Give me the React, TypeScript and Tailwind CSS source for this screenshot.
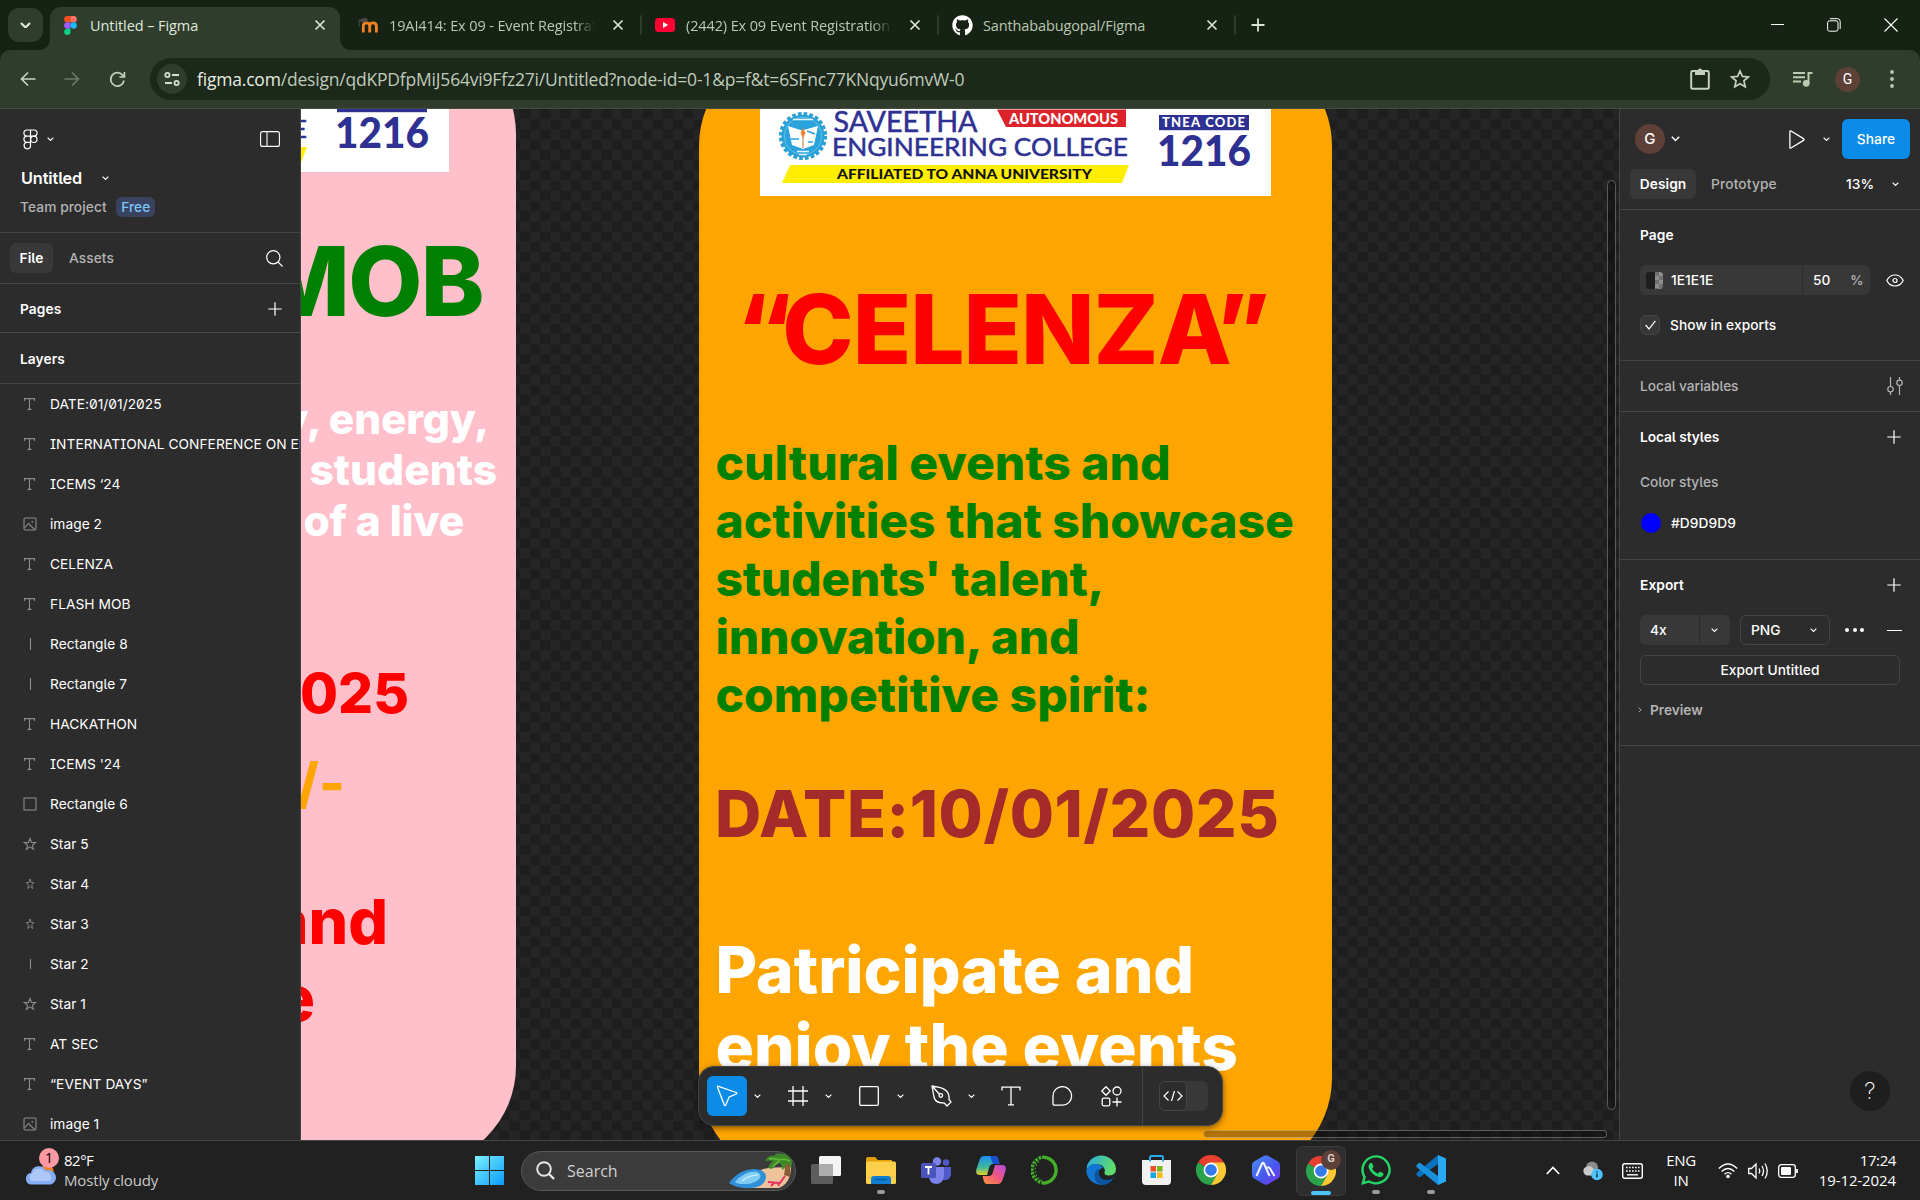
import React from "react";
import { FaGithub, FaWhatsapp } from "react-icons/fa";

const INTER = "font-[Inter,sans-serif] [font-feature-settings:'cv05']";

function Chevron({ className = "", w = 7 }: { className?: string; w?: number }) {
  return (
    <svg width={w} height={w * 0.62} viewBox="0 0 8 5" fill="none" className={`shrink-0 ${className}`}>
      <path d="M0.7 0.7 L4 4 L7.3 0.7" stroke="currentColor" strokeWidth="1.3" />
    </svg>
  );
}

function Plus() {
  return (
    <svg width="14" height="14" viewBox="0 0 14 14" className="shrink-0">
      <path d="M7 0.3V13.7M0.3 7H13.7" stroke="#fff" strokeWidth="1.2" />
    </svg>
  );
}

function Close() {
  return (
    <svg width="12" height="12" viewBox="0 0 12 12" className="shrink-0">
      <path d="M1.5 1.5L10.5 10.5M10.5 1.5L1.5 10.5" stroke="#dbe5d6" strokeWidth="1.7" />
    </svg>
  );
}

function Tab({ icon, label, faded }: { icon: React.ReactNode; label: string; faded?: boolean }) {
  return (
    <div className="flex h-[50px] w-[297px] items-center">
      <div className="ml-[13px] flex w-[31px] items-center">{icon}</div>
      <div
        className={`w-[206px] overflow-hidden pt-px text-[14.5px] tracking-[-0.12px] whitespace-nowrap text-[#b8c8b1] ${
          faded ? "[mask-image:linear-gradient(to_right,#000_90%,transparent)]" : ""
        }`}
      >
        {label}
      </div>
      <div className="ml-[17px]">
        <Close />
      </div>
      <div className="ml-auto h-5 w-0.5 rounded bg-[#2e3b2b]" />
    </div>
  );
}

function FigmaMark() {
  return (
    <svg width="13" height="19" viewBox="0 0 12 18">
      <path d="M3 0H6V6H3A3 3 0 0 1 3 0Z" fill="#f24e1e" />
      <path d="M6 0H9A3 3 0 0 1 9 6H6Z" fill="#ff7262" />
      <path d="M3 6H6V12H3A3 3 0 0 1 3 6Z" fill="#a259ff" />
      <circle cx="9" cy="9" r="3" fill="#1abcfe" />
      <path d="M3 12H6V15A3 3 0 1 1 3 12Z" fill="#0acf83" />
    </svg>
  );
}

function BrowserChrome() {
  return (
    <header className="h-[109px] shrink-0 bg-[#162213] font-['Open_Sans',sans-serif]">
      <div className="flex h-[50px]">
        <div className="mt-2 ml-2 flex h-[34px] w-[35px] items-center justify-center rounded-[11px] bg-[#303d2d]">
          <Chevron w={11} className="text-[#dfe8da] [&>path]:[stroke-width:1.6]" />
        </div>
        <div className="relative mt-[7px] ml-[7px] flex h-[43px] w-[290px] rounded-t-[11px] bg-[#303d2d]">
          <svg className="absolute bottom-0 -left-[11px]" width="11" height="11">
            <path d="M11 0V11H0A11 11 0 0 0 11 0Z" fill="#303d2d" />
          </svg>
          <svg className="absolute -right-[11px] bottom-0" width="11" height="11">
            <path d="M0 0V11H11A11 11 0 0 1 0 0Z" fill="#303d2d" />
          </svg>
          <div className="flex h-9 w-full items-center">
            <div className="ml-[14px] w-[26px]">
              <FigmaMark />
            </div>
            <div className="pt-px text-[14.5px] tracking-[-0.08px] whitespace-nowrap text-[#dfe8da]">Untitled – Figma</div>
            <div className="mr-[14px] ml-auto">
              <Close />
            </div>
          </div>
        </div>
        <div className="ml-[5px] flex">
          <Tab
            faded
            label="19AI414: Ex 09 - Event Registration"
            icon={
              <svg width="21" height="16" viewBox="0 0 21 16" fill="none">
                <path d="M5.3 15.5V9Q5.3 5.8 8.5 5.8Q11.700 5.800 11.700 9V15.500M11.700 9Q11.700 5.800 15 5.800Q18.400 5.800 18.400 9V15.500" stroke="#f58220" strokeWidth="2.800" />
                <path d="M0 3L8 0.5L10 3L5 6Z" fill="#4b4b4b" />
                <path d="M1.2 3V10" stroke="#4b4b4b" />
              </svg>
            }
          />
          <Tab
            faded
            label="(2442) Ex 09 Event Registration F"
            icon={
              <svg width="20" height="14" viewBox="0 0 20 14">
                <rect width="20" height="14" rx="3.5" fill="#f03" />
                <path d="M8 4L13.2 7L8 10Z" fill="#fff" />
              </svg>
            }
          />
          <Tab label="Santhababugopal/Figma" icon={<FaGithub size={21} color="#fff" />} />
        </div>
        <svg width="14" height="14" viewBox="0 0 14 14" className="mt-[18px] ml-[15px]">
          <path d="M7 0.5V13.5M0.5 7H13.5" stroke="#dbe5d6" strokeWidth="1.8" />
        </svg>
        <div className="mr-[22px] ml-auto flex h-[49px] items-center gap-[43px]">
          <div className="h-px w-[13px] bg-white" />
          <svg width="14" height="14" viewBox="0 0 14 14" fill="none" stroke="#fff">
            <rect x="0.6" y="2.8" width="10.4" height="10.4" rx="2" />
            <path d="M3 0.7H10.5Q13.2 0.7 13.2 3.5V11" />
          </svg>
          <svg width="14" height="14" viewBox="0 0 14 14">
            <path d="M0.5 0.5L13.5 13.5M13.5 0.5L0.5 13.5" stroke="#fff" strokeWidth="1.1" />
          </svg>
        </div>
      </div>
      <div className="flex h-[59px] rounded-t-[10px] border-b border-[#454c43] bg-[#303d2d]">
        <div className="flex h-[58px] w-full items-center text-[#b9ccb2]">
          <svg width="16" height="16" viewBox="0 0 16 16" fill="none" stroke="#c3d3bc" strokeWidth="1.7" className="ml-5">
            <path d="M15.5 8H1.5M8 1.5L1.5 8L8 14.5" />
          </svg>
          <svg width="16" height="16" viewBox="0 0 16 16" fill="none" stroke="#6c7a68" strokeWidth="1.7" className="ml-7">
            <path d="M0.5 8H14.5M8 1.5L14.5 8L8 14.5" />
          </svg>
          <svg width="17" height="17" viewBox="0 0 17 17" fill="none" stroke="#c3d3bc" strokeWidth="1.7" className="ml-[29px]">
            <path d="M15 9.5A6.7 6.7 0 1 1 13.6 4.2L15 5.5M15.4 1V6H10.4" />
          </svg>
          <div className="ml-6 flex h-[42px] w-[1620px] items-center rounded-full bg-[#1c2819]">
            <div className="ml-[7px] flex size-[30px] items-center justify-center rounded-full bg-[#303d2d]">
              <svg width="16" height="16" viewBox="0 0 16 16" fill="none" stroke="#d5e0cf" strokeWidth="1.8">
                <circle cx="3.4" cy="4" r="2.1" />
                <path d="M8 4H15M1 12H8" />
                <circle cx="12.6" cy="12" r="2.1" />
              </svg>
            </div>
            <div className="ml-[10px] text-[17.5px] tracking-[-0.195px] whitespace-nowrap text-[#bfcbb9]">
              <span className="text-[#e6ece2]">figma.com</span>/design/qdKPDfpMiJ564vi9Ffz27i/Untitled?node-id=0-1&amp;p=f&amp;t=6SFnc77KNqyu6mvW-0
            </div>
            <svg width="20" height="22" viewBox="0 0 20 22" fill="none" className="ml-auto">
              <rect x="1.2" y="3" width="17.6" height="17.8" rx="1.5" stroke="#c5cfc0" strokeWidth="2" />
              <path d="M5 3H15V7H5Z" fill="#c5cfc0" />
              <circle cx="10" cy="2.7" r="2.2" fill="#c5cfc0" />
            </svg>
            <svg width="20" height="20" viewBox="0 0 20 20" fill="none" className="mr-5 ml-5">
              <path d="M10 2L12.4 7.4L18.3 8L13.9 11.9L15.2 17.7L10 14.7L4.8 17.7L6.1 11.9L1.7 8L7.6 7.4Z" stroke="#c5cfc0" strokeWidth="1.7" />
            </svg>
          </div>
          <svg width="20" height="16" viewBox="0 0 20 16" fill="none" stroke="#b9ccb2" strokeWidth="2" className="ml-[23px]">
            <path d="M0 2H12M0 6.2H12M0 10.4H8M15.5 12.5V2H19.5" />
            <circle cx="13.2" cy="12.3" r="2.4" fill="#b9ccb2" />
          </svg>
          <div className="ml-[22px] flex size-[25px] items-center justify-center rounded-full bg-[#5d4037] font-[Roboto,sans-serif] text-[14px] text-white">
            G
          </div>
          <svg width="4" height="18" viewBox="0 0 4 18" fill="#b9ccb2" className="ml-[30px]">
            <circle cx="2" cy="2" r="1.9" />
            <circle cx="2" cy="9" r="1.9" />
            <circle cx="2" cy="16" r="1.9" />
          </svg>
        </div>
      </div>
    </header>
  );
}

type Kind = "text" | "image" | "line" | "rect" | "star" | "ministar" | "shortline";

const layers: [Kind, string][] = [
  ["text", "DATE:01/01/2025"],
  ["text", "INTERNATIONAL CONFERENCE ON EN"],
  ["text", "ICEMS ‘24"],
  ["image", "image 2"],
  ["text", "CELENZA"],
  ["text", "FLASH MOB"],
  ["line", "Rectangle 8"],
  ["line", "Rectangle 7"],
  ["text", "HACKATHON"],
  ["text", "ICEMS '24"],
  ["rect", "Rectangle 6"],
  ["star", "Star 5"],
  ["ministar", "Star 4"],
  ["ministar", "Star 3"],
  ["shortline", "Star 2"],
  ["star", "Star 1"],
  ["text", "AT SEC"],
  ["text", "“EVENT DAYS”"],
  ["image", "image 1"],
];

const STAR = "M7 1.5L8.5 5.4L12.6 5.6L9.4 8.1L10.5 12.2L7 9.9L3.5 12.2L4.6 8.1L1.4 5.6L5.5 5.4Z";

function LayerIcon({ kind }: { kind: Kind }) {
  return (
    <svg width="14" height="14" viewBox="0 0 14 14" fill="none" stroke="#8c8c8c" strokeWidth="1.1" className="shrink-0">
      {kind === "text" && <path d="M1.5 4V1.6H11.5V4M6.5 1.6V12.4M4.5 12.4H8.5" />}
      {kind === "image" && (
        <>
          <rect x="1" y="1" width="12" height="12" rx="1.5" />
          <path d="M1.5 11L5.5 6.5L11.5 12.5" />
          <circle cx="9.3" cy="4.8" r="0.9" fill="#8c8c8c" stroke="none" />
        </>
      )}
      {kind === "line" && <path d="M7.5 1V13" />}
      {kind === "shortline" && <path d="M7.5 2V12" />}
      {kind === "rect" && <rect x="1" y="1" width="12" height="12" />}
      {kind === "star" && <path d={STAR} />}
      {kind === "ministar" && <path d={STAR} transform="translate(2.2 0.6) scale(0.7 0.9)" />}
    </svg>
  );
}

function LeftPanel() {
  return (
    <aside className={`flex w-[301px] shrink-0 flex-col border-r border-[#444] bg-[#2c2c2c] text-[13.75px] tracking-[0.07px] text-white ${INTER}`}>
      <div className="h-[124px] border-b border-[#444] pl-5">
        <div className="flex h-[60px] items-center pr-5">
          <svg width="15" height="21" viewBox="0 0 15 21" fill="none" stroke="#fff" strokeWidth="1.2" className="ml-[3px]">
            <path d="M7.5 1H4A3.1 3.1 0 0 0 4 7.2H7.5ZM7.5 1H11A3.1 3.1 0 0 1 11 7.2H7.5ZM7.5 7.2H4A3.1 3.1 0 0 0 4 13.4H7.5ZM4 13.4A3.2 3.2 0 1 0 7.5 16.5V13.4Z" />
            <circle cx="10.8" cy="10.3" r="3.2" />
          </svg>
          <Chevron className="ml-[9px]" />
          <svg width="20" height="16" viewBox="0 0 20 16" fill="none" stroke="#fff" strokeWidth="1.1" className="ml-auto">
            <rect x="0.6" y="0.6" width="18.8" height="14.8" rx="2" />
            <path d="M7 0.6V15.4" />
          </svg>
        </div>
        <div className="mt-[-1px] flex h-5 items-center pl-px text-[16.25px] font-semibold tracking-[-0.1px]">
          Untitled
          <Chevron className="ml-[20px]" />
        </div>
        <div className="mt-[9px] flex h-5 items-center font-[450] text-[#b3b3b3]">
          Team project
          <span className="ml-[9.5px] flex h-5 items-center rounded-[6px] bg-[#394360] px-[5px] text-[#7cc4f8]">Free</span>
        </div>
      </div>
      <div className="flex h-[51px] items-center border-b border-[#444] px-2.5">
        <div className="flex h-[30px] w-[43px] items-center justify-center rounded-[6px] bg-[#383838] font-semibold">File</div>
        <div className="ml-4 font-[450] text-[#b3b3b3]">Assets</div>
        <svg width="17" height="17" viewBox="0 0 17 17" fill="none" stroke="#fff" strokeWidth="1.2" className="mr-[7px] ml-auto">
          <circle cx="7.3" cy="7.3" r="6.6" />
          <path d="M12.2 12.2L16.5 16.5" />
        </svg>
      </div>
      <div className="flex h-[49px] items-center justify-between border-b border-[#4b4b4b] pt-[2px] pr-[18px] pl-5 font-semibold">
        Pages
        <Plus />
      </div>
      <div className="flex h-[51px] items-center border-b border-[#444] pt-[2px] pl-5 font-semibold">Layers</div>
      <div className="min-h-0 flex-1 overflow-hidden">
        {layers.map(([kind, name]) => (
          <div key={name} className="flex h-10 items-center pl-[23px]">
            <LayerIcon kind={kind} />
            <span className="ml-[13px] tracking-[0.03px] whitespace-nowrap [font-feature-settings:'zero','cv08','cv05']">{name}</span>
          </div>
        ))}
      </div>
    </aside>
  );
}

function CollegeLogo({ className = "", cropped }: { className?: string; cropped?: boolean }) {
  return (
    <svg width="512" height="88" viewBox="759 109 512 88" className={className} fontFamily="Lato, sans-serif" fontWeight="400">
      <path d="M996 109.5H1125V127H1005Z" fill="#dc2329" />
      <path d="M789 165H1128L1121 183H781Z" fill="#ffee00" />
      <g fill="#2e3192">
        <rect x="1158" y="115" width="90" height="15.2" />
        <text x="1156" y="166" fontSize="41.5" fontWeight="900" textLength="94" lengthAdjust="spacingAndGlyphs">1216</text>
      </g>
      {cropped ? (
        <text x="1128" y="156.3" fontSize="24.5" fill="#2e3192" stroke="#2e3192" strokeWidth="0.5" textAnchor="end">E</text>
      ) : (
        <>
          <circle cx="802" cy="136" r="21.5" fill="#2aa3dc" />
          <circle cx="802" cy="136" r="22.3" fill="none" stroke="#2a9fd0" strokeWidth="3.6" strokeDasharray="3.6 2.24" />
          <circle cx="802" cy="136" r="18.6" fill="none" stroke="#7fd0ee" strokeWidth="0.6" />
          <path d="M787 126L801 130.5L817 126L813 145L802 149L791 145Z" fill="#fff" />
          <path d="M802 131V148" stroke="#b5793a" strokeWidth="1" />
          <path d="M802 128L804.5 133L802 138L799.5 133Z" fill="#f0812a" />
          <path d="M792 119.5H812M796 151.5H808M798 154.5H806" stroke="#e8f6fc" strokeWidth="1.3" />
          <path d="M790 139H798M806 131L814 134M807 142H812" stroke="#2aa3dc" strokeWidth="1.4" />
          <g fill="#2e3192" stroke="#2e3192" strokeWidth="0.5">
            <text x="832.5" y="132.3" fontSize="28" textLength="144" lengthAdjust="spacingAndGlyphs">SAVEETHA</text>
            <text x="831" y="156.3" fontSize="24.5" textLength="296" lengthAdjust="spacingAndGlyphs">ENGINEERING COLLEGE</text>
          </g>
          <text x="1161" y="127.4" fontSize="13" fontWeight="900" fill="#fff" textLength="83">TNEA CODE</text>
          <text x="1008" y="123.8" fontSize="15" fontWeight="900" fill="#fff" textLength="109" lengthAdjust="spacingAndGlyphs">AUTONOMOUS</text>
          <text x="836" y="179" fontSize="13.6" fontWeight="900" fill="#141414" textLength="255" lengthAdjust="spacingAndGlyphs">
            AFFILIATED TO ANNA UNIVERSITY
          </text>
        </>
      )}
    </svg>
  );
}

function Canvas() {
  return (
    <main className="relative min-w-0 flex-1 overflow-hidden bg-[repeating-conic-gradient(#1e1e1e_0_25%,#252525_0_50%)] bg-[length:20.448px_20.448px] bg-[position:4.3px_0px] font-[Inter,sans-serif] leading-[1.21] font-extrabold whitespace-nowrap">
      {/* flash mob poster */}
      <section className="absolute -top-[75px] -left-[418px] h-[1132px] w-[633px] rounded-[100px] bg-[#ffc0cb]">
        <div className="absolute top-[75px] left-[54px] h-[63px] w-[512px] overflow-hidden bg-white">
          <CollegeLogo cropped className="-mt-[18px] ml-px" />
        </div>
        <div className="absolute top-[189px] right-[33px] text-[96px] tracking-[-1.6px] text-[#008000]">MOB</div>
        <div className="absolute top-[358.5px] right-[19px] flex flex-col items-end text-[42.5px] text-white">
          <div className="mr-[8px] tracking-[-0.2px]">y, energy,</div>
          <div>students</div>
          <div className="mr-[33px] tracking-[-0.2px]">of a live</div>
        </div>
        <div className="absolute top-[625.5px] right-[107px] text-[55px] text-[#ff0000]">025</div>
        <div className="absolute top-[716px] right-[171px] text-[55px] text-[#ffa500]">/-</div>
        <div className="absolute top-[849.5px] right-[128px] text-[62.5px] text-[#ff0000]">and</div>
        <div className="absolute top-[927px] right-[201px] text-[62.5px] text-[#ff0000]">e</div>
      </section>

      {/* celenza poster */}
      <section className="absolute -top-[63px] left-[397.5px] h-[1132px] w-[633.5px] rounded-[100px] bg-[#ffa500]">
        <div className="absolute top-[63px] left-[61px] h-[87px] w-[511px] overflow-hidden bg-white">
          <CollegeLogo />
        </div>
        <div className="absolute top-[224.5px] left-[38px] text-[96px] tracking-[-1px] text-[#ff0000]">
          <span className="mr-[-9px]">“</span>CELENZA<span className="ml-[-15px]">”</span>
        </div>
        <div className="absolute top-[388px] left-[17px] text-[48px] leading-[58px] text-[#008000]">
          cultural events and
          <br />
          activities that showcase
          <br />
          <span className="tracking-[-0.3px]">students' talent,</span>
          <br />
          <span className="tracking-[-0.25px]">innovation, and</span>
          <br />
          competitive spirit:
        </div>
        <div className="absolute top-[729px] left-[16.5px] text-[64px] tracking-[0.6px] text-[#a52a2a]">DATE:10/01/2025</div>
        <div className="absolute top-[884.5px] left-[17px] text-[64px] text-white">
          Patricipate and
          <br />
          enjoy the events
        </div>
      </section>

      <div className="absolute top-[71px] right-[3px] h-[930px] w-[9px] rounded-full border border-[#5a5a5a] bg-black/30" />
      <div className="absolute bottom-[2px] left-[902px] h-[8px] w-[404px] rounded-full border border-white/30 bg-black/30" />

      <ToolDock />
    </main>
  );
}

function ToolDock() {
  return (
    <div className="absolute top-[957px] left-[397px] flex h-[60px] w-[525px] items-center rounded-[16px] border border-[#444] bg-[#2c2c2c] text-white shadow-[0_2px_6px_rgba(0,0,0,0.5)]">
      <div className="ml-2 flex size-10 items-center justify-center rounded-[6px] bg-[#0c8ce9]">
        <svg width="22" height="22" viewBox="0 0 22 22" fill="none" stroke="#fff" strokeWidth="1.3" strokeLinejoin="round">
          <path d="M1.5 2.3Q1 0.8 2.5 1.3L20.2 7.5Q21.5 8.2 20.2 9L13 12.2L9.8 20Q9 21.3 8.3 20Z" />
        </svg>
      </div>
      <Chevron className="ml-[7px]" />
      <svg width="20" height="20" viewBox="0 0 20 20" stroke="#fff" strokeWidth="1.3" className="ml-[27px]">
        <path d="M5 0V20M15 0V20M0 5H20M0 15H20" />
      </svg>
      <Chevron className="ml-[17px]" />
      <svg width="20" height="20" viewBox="0 0 20 20" fill="none" stroke="#fff" strokeWidth="1.3" className="ml-[27px]">
        <rect x="0.7" y="0.7" width="18.6" height="18.6" rx="1" />
      </svg>
      <Chevron className="ml-[18px]" />
      <svg width="21" height="22" viewBox="0 0 21 22" fill="none" stroke="#fff" strokeWidth="1.3" strokeLinejoin="round" className="ml-[27px]">
        <path d="M1 1L3 12Q4 16.5 8.5 17.5L13.5 18.2L16 21L20 17L18 14.5Q18.5 9 15.5 6Q13.5 3.8 9.5 2.6ZM1 1L8.5 9.2" />
        <circle cx="9.8" cy="10.5" r="1.8" />
      </svg>
      <Chevron className="ml-[16px]" />
      <svg width="20" height="20" viewBox="0 0 20 20" fill="none" stroke="#fff" strokeWidth="1.3" className="ml-[26px]">
        <path d="M1 4.5V1.2H19V4.5M10 1.2V18.8M7 18.8H13" />
      </svg>
      <svg width="21" height="20" viewBox="0 0 21 20" fill="none" stroke="#fff" strokeWidth="1.3" className="ml-[31px]">
        <path d="M1 17.5V10A9.3 9.3 0 1 1 10.5 19.2H2.5Q1 19.2 1 17.5Z" />
      </svg>
      <svg width="21" height="21" viewBox="0 0 21 21" fill="none" stroke="#fff" strokeWidth="1.3" strokeLinejoin="round" className="ml-[28px]">
        <path d="M5 0.8L9.2 5L5 9.2L0.8 5ZM16 11.5V20.5M11.5 16H20.5" />
        <circle cx="16" cy="5" r="4" />
        <rect x="1.2" y="12.2" width="7.6" height="7.6" rx="1.5" />
      </svg>
      <div className="ml-[20px] h-full w-px bg-[#444]" />
      <div className="ml-4 h-[30px] w-[49px] rounded-[6px] bg-[#383838]">
        <div className="flex h-[30px] w-7 items-center justify-center rounded-[6px] border border-[#444] bg-[#2c2c2c]">
          <svg width="20" height="12" viewBox="0 0 20 12" fill="none" stroke="#fff" strokeWidth="1.2" className="shrink-0">
            <path d="M5.5 1.5L1 6L5.5 10.5M14.5 1.5L19 6L14.5 10.5M11.5 1L8.5 11" />
          </svg>
        </div>
      </div>
    </div>
  );
}

function RightPanel() {
  return (
    <aside className={`relative flex w-[301px] shrink-0 flex-col border-l border-[#444] bg-[#2c2c2c] text-[13.75px] font-[450] tracking-[0.05px] text-white ${INTER}`}>
      <div className="h-[101px] border-b border-[#444]">
        <div className="flex h-[60px] items-center pl-[15px]">
          <div className="flex size-[30px] items-center justify-center rounded-full bg-[#5d4037] text-[15px]">G</div>
          <Chevron w={9} className="ml-[6px]" />
          <svg width="16" height="19" viewBox="0 0 16 19" fill="none" stroke="#fff" strokeWidth="1.3" strokeLinejoin="round" className="ml-[109px]">
            <path d="M0.9 1.6Q0.9 0.4 2 1L14.5 8.6Q15.5 9.5 14.5 10.4L2 18Q0.9 18.6 0.9 17.4Z" />
          </svg>
          <Chevron className="ml-[18px]" />
          <div className="ml-[12px] flex h-10 w-[68px] items-center justify-center rounded-[6px] bg-[#0c8ce9] font-medium">Share</div>
        </div>
        <div className="flex h-[30px] items-center pl-2.5">
          <div className="flex h-[30px] w-[66px] items-center justify-center rounded-[6px] bg-[#383838] font-semibold">Design</div>
          <div className="ml-[15px] w-[135px] tracking-[0.15px] text-[#b3b3b3]">Prototype</div>
          <div className="w-[46px]">13%</div>
          <Chevron />
        </div>
      </div>
      <div className="h-[151px] border-b border-[#444] pt-2.5 pl-5">
        <div className="flex h-[30px] items-center font-semibold">Page</div>
        <div className="mt-[15px] flex h-[30px] items-center">
          <div className="flex h-[30px] w-[230px] items-center rounded-[6px] bg-[#383838]">
            <div className="ml-[6px] flex size-[17px] overflow-hidden rounded-[3px] bg-[#1e1e1e]">
              <div className="ml-[9px] size-full bg-[repeating-conic-gradient(#8e8e8e_0_25%,#707070_0_50%)] bg-[length:8px_8px]" />
            </div>
            <div className="ml-[8px] w-[131px]">1E1E1E</div>
            <div className="h-full w-px bg-[#2c2c2c]" />
            <div className="ml-[10px] w-[37px]">50</div>
            <div className="text-[#b3b3b3]">%</div>
          </div>
          <svg width="18" height="13" viewBox="0 0 18 13" fill="none" stroke="#fff" strokeWidth="1.2" className="ml-4">
            <path d="M0.8 6.5Q3.5 1 9 1Q14.5 1 17.2 6.5Q14.5 12 9 12Q3.5 12 0.8 6.5Z" />
            <circle cx="9" cy="6.5" r="2" />
          </svg>
        </div>
        <div className="mt-5 flex h-5 items-center">
          <div className="flex size-5 items-center justify-center rounded-[6px] border border-[#444] bg-[#383838]">
            <svg width="11" height="10" viewBox="0 0 11 10" fill="none" stroke="#fff" strokeWidth="1.2">
              <path d="M0.6 5L4 9L10.4 0.8" />
            </svg>
          </div>
          <span className="ml-2.5">Show in exports</span>
        </div>
      </div>
      <div className="flex h-[51px] items-center justify-between border-b border-[#444] pr-[17px] pl-5 text-[#b3b3b3]">
        <span className="tracking-[-0.08px]">Local variables</span>
        <svg width="16" height="18" viewBox="0 0 16 18" fill="none" stroke="#b3b3b3" strokeWidth="1.2">
          <path d="M3.5 0V9.5M3.5 15V18M12.5 0V3M12.5 8.5V18" />
          <circle cx="3.5" cy="12.2" r="2.7" />
          <circle cx="12.5" cy="5.8" r="2.7" />
        </svg>
      </div>
      <div className="h-[148px] border-b border-[#444] pl-5">
        <div className="flex h-[50px] items-center justify-between pr-[19px] font-semibold">
          <span className="tracking-[-0.08px]">Local styles</span>
          <Plus />
        </div>
        <div className="flex h-10 items-center tracking-[-0.05px] text-[#b3b3b3]">Color styles</div>
        <div className="flex h-[42px] items-center">
          <div className="ml-px size-5 rounded-full bg-[#0000ff]" />
          <span className="ml-2.5">#D9D9D9</span>
        </div>
      </div>
      <div className="h-[186px] border-b border-[#444] pl-5">
        <div className="flex h-[50px] items-center justify-between pr-[19px] font-semibold">
          Export
          <Plus />
        </div>
        <div className="mt-[5px] flex h-[30px] items-center">
          <div className="flex h-[30px] w-[90px] items-center rounded-[6px] bg-[#383838] pl-2.5">
            <span className="w-[49px]">4x</span>
            <div className="h-full w-px bg-[#2c2c2c]" />
            <Chevron className="ml-[11px]" />
          </div>
          <div className="ml-2.5 flex h-[30px] w-[90px] items-center justify-between rounded-[6px] border border-[#444] pr-3 pl-2.5">
            PNG
            <Chevron />
          </div>
          <div className="ml-[15px] flex gap-[3.5px]">
            <span className="size-1 rounded-full bg-white" />
            <span className="size-1 rounded-full bg-white" />
            <span className="size-1 rounded-full bg-white" />
          </div>
          <div className="ml-[23px] h-px w-[15px] bg-white" />
        </div>
        <div className="mt-2.5 flex h-[30px] w-[260px] items-center justify-center rounded-[6px] border border-[#444]">Export Untitled</div>
        <div className="mt-2.5 flex h-[30px] items-center font-semibold text-[#b3b3b3]">
          <Chevron w={6} className="-ml-[3px] -rotate-90" />
          <span className="ml-[7px] tracking-[-0.05px]">Preview</span>
        </div>
      </div>
      <div className="absolute right-[30px] bottom-[29px] flex size-10 items-center justify-center rounded-full bg-[#1e1e1e] text-[23px] font-extralight">?</div>
    </aside>
  );
}

function ChromeIcon() {
  return (
    <svg width="30" height="30" viewBox="0 0 30 30">
      <path d="M15 15L2 7.5A15 15 0 0 1 28 7.5Z" fill="#e8402f" />
      <path d="M15 15L2 7.5A15 15 0 0 0 15 30L21.5 18.7Z" fill="#2ba24c" />
      <path d="M15 15V7.5H28A15 15 0 0 1 15 30L21.5 18.7Z" fill="#fcc934" />
      <circle cx="15" cy="15" r="7.4" fill="#fff" />
      <circle cx="15" cy="15" r="5.8" fill="#3579ea" />
    </svg>
  );
}

function AppSlot({ children, running }: { children: React.ReactNode; running?: boolean }) {
  return (
    <div className="relative flex h-[59px] w-[30px] items-center justify-center">
      {children}
      {running && <div className="absolute bottom-[6px] h-1 w-2 rounded-full bg-[#9a9a9a]" />}
    </div>
  );
}

function Taskbar() {
  return (
    <footer className="flex h-[60px] shrink-0 items-center border-t border-[#444] bg-[#212121] font-['Open_Sans',sans-serif] text-[15px] text-white">
      <div className="flex w-[475px] items-center">
        <div className="relative ml-[25px] h-[40px] w-[39px]">
          <svg width="32" height="36" viewBox="0 0 32 36" className="absolute top-[3px] left-0">
            <circle cx="22" cy="17" r="6.5" fill="#f2811d" />
            <path d="M6 30.5A5.8 5.8 0 0 1 6 19A8 8 0 0 1 21 16.5A7 7 0 0 1 26 30.5Z" fill="#86aef2" />
            <path d="M6 27A5 5 0 0 1 7 19.5A7.5 7.5 0 0 1 20 17.5A6 6 0 0 1 25 27Z" fill="#adc8f7" />
          </svg>
          <div className="absolute -top-[3px] left-[14px] flex size-5 items-center justify-center rounded-full bg-[#ff99a4] text-[14px] text-black">1</div>
        </div>
        <div className="relative -top-px leading-5 tracking-[-0.15px]">
          <div className="tracking-[-0.5px]">82°F</div>
          <div className="text-[#c9c9c9]">Mostly cloudy</div>
        </div>
      </div>
      <svg width="29" height="29" viewBox="0 0 29 29">
        <defs>
          <linearGradient id="win" x1="0" y1="0" x2="1" y2="1" gradientUnits="objectBoundingBox">
            <stop offset="0" stopColor="#7cf0fd" />
            <stop offset="1" stopColor="#0a9bfb" />
          </linearGradient>
        </defs>
        <path d="M0 0H14V14H0ZM15 0H29V14H15ZM0 15H14V29H0ZM15 15H29V29H15Z" fill="url(#win)" />
      </svg>
      <div className="ml-[17px] flex h-10 w-[275px] items-center overflow-hidden rounded-full border border-[#585858] bg-[#3b3b3b]">
        <svg width="19" height="19" viewBox="0 0 19 19" fill="none" stroke="#e8e8e8" strokeWidth="1.9" className="ml-[14px]">
          <circle cx="8" cy="8" r="6.8" />
          <path d="M13 13L18 18" strokeWidth="2.4" />
        </svg>
        <span className="ml-[12px] text-[16px] text-[#d0d0d0]">Search</span>
        <svg width="64" height="36" viewBox="0 0 64 36" className="mr-[2px] ml-auto">
          <path d="M22 20Q34 15 46 14.5L62 14Q62 30 50 35H14Z" fill="#eec39c" />
          <path d="M54 8Q57 14 55 22L61 24Q62 12 59 6Z" fill="#8a5d36" />
          <path d="M0 30Q10 16 26 16Q37 17 37 24Q36 34 22 35Q8 36 0 30Z" fill="#2f8fd8" />
          <path d="M6 29Q14 19 26 18.5Q33 19.5 31 25Q26 31 16 31Q9 31.5 6 29Z" fill="#7fccf5" />
          <path d="M13 28Q20 22 29 22" stroke="#c5eafc" strokeWidth="1.5" fill="none" />
          <path d="M36 8Q39 2 45 3Q47 -1 52 1Q58 -1 60 4Q65 7 62 15Q60 11 57 10Q57 15 53 17Q53 12 51 10Q45 12 43 16L39 15Q41 10 44 8Q40 7 36 8Z" fill="#3d8a26" />
          <path d="M40 6Q46 5 50 7Q55 5 61 8M50 8Q46 11 44 14" stroke="#63b53c" strokeWidth="1.6" fill="none" />
          <path d="M39 29L51 30L56 23M42 33L46 29M50 33L49 30" stroke="#e4315f" strokeWidth="2" fill="none" />
        </svg>
      </div>
      <div className="ml-[15px] flex gap-[25px]">
        <AppSlot>
          <svg width="30" height="28" viewBox="0 0 30 28">
            <rect x="0" y="8" width="22" height="20" rx="1.5" fill="#5d5d5d" />
            <rect x="8" y="0" width="22" height="20" rx="1.5" fill="#f4f4f4" />
            <rect x="8" y="8" width="14" height="12" fill="#adadad" />
          </svg>
        </AppSlot>
        <AppSlot running>
          <svg width="30" height="27" viewBox="0 0 30 27">
            <path d="M0 2Q0 0 2 0H9L12 3H26V8H0Z" fill="#e3a008" />
            <rect x="0" y="4.5" width="30" height="22.5" rx="1.5" fill="#fdd04c" />
            <path d="M5 27V22Q5 19 8 19H22Q25 19 25 22V27Z" fill="#0f7fd4" />
            <path d="M9 22.5H21" stroke="#0a5a9e" strokeWidth="1.4" />
          </svg>
        </AppSlot>
        <AppSlot>
          <svg width="30" height="27" viewBox="0 0 30 27">
            <circle cx="16" cy="4.5" r="4.2" fill="#7b83eb" />
            <circle cx="25" cy="5.5" r="3.2" fill="#5059c9" />
            <path d="M20 10H30V18Q29 24 22 23Z" fill="#5059c9" />
            <path d="M8 10H23V19Q22 27 15 27Q8 26 8 19Z" fill="#7b83eb" />
            <rect x="0" y="6" width="15" height="15" rx="1.5" fill="#4b53bc" />
            <path d="M4 10H11M7.5 10V17.5" stroke="#fff" strokeWidth="1.8" />
          </svg>
        </AppSlot>
        <AppSlot>
          <svg width="30" height="28" viewBox="0 0 30 28">
            <defs>
              <linearGradient id="copA" x1="0" y1="0" x2="0" y2="1">
                <stop offset="0" stopColor="#1f8ff0" />
                <stop offset="0.6" stopColor="#3fb89a" />
                <stop offset="1" stopColor="#e8d02a" />
              </linearGradient>
              <linearGradient id="copB" x1="1" y1="0" x2="0" y2="1">
                <stop offset="0" stopColor="#b44ce8" />
                <stop offset="0.5" stopColor="#f0567c" />
                <stop offset="1" stopColor="#fa9a3c" />
              </linearGradient>
            </defs>
            <path d="M14 0H19Q21.5 0 22.5 4L23.5 8H17Q14 8 13 12L11 19H4Q-1 19 0.5 13L3.5 4Q5 0 8 0Z" fill="url(#copA)" />
            <path d="M14 0H19Q21.5 0 22.5 4L23.5 8H17Z" fill="#1b4fd0" />
            <path d="M16 28H11Q8.5 28 7.5 24L6.5 20H13Q16 20 17 16L19 9H26Q31 9 29.5 15L26.5 24Q25 28 22 28Z" fill="url(#copB)" />
          </svg>
        </AppSlot>
        <AppSlot>
          <svg width="30" height="30" viewBox="0 0 30 30" fill="none">
            <path d="M11 2.2A13 13 0 1 1 13 28.2" stroke="#43b02a" strokeWidth="3.4" />
            <path d="M13 28A13.1 13.1 0 0 1 11 2.2" stroke="#43b02a" strokeWidth="3.4" strokeDasharray="2.6 1.1" />
            <path d="M11 25.5A11.3 11.3 0 0 1 9 5.8" stroke="#43b02a" strokeWidth="1.2" strokeDasharray="1.5 2" />
          </svg>
        </AppSlot>
        <AppSlot>
          <svg width="30" height="30" viewBox="0 0 30 30">
            <defs>
              <linearGradient id="edgeTop" x1="0" y1="0" x2="1" y2="0.3">
                <stop offset="0" stopColor="#2aa9e8" />
                <stop offset="1" stopColor="#5fdc6a" />
              </linearGradient>
            </defs>
            <path d="M0.5 14A14.8 14.8 0 0 1 30 14Q30 20 23 20.5Q18 20.5 18.5 17.5Q20 14 16 10.5Q8 6 0.5 14Z" fill="url(#edgeTop)" />
            <path d="M0.2 16Q2 8.5 10 9Q15 9.5 17.5 13Q13 13 12.5 18Q12.5 26 20 29A15 15 0 0 1 0.2 16Z" fill="#1277d3" />
            <path d="M12.5 17Q13 24 20 25Q25 25 28 22Q24 30 16 30Q8 28 8.5 20Q9 15 13 13.5Z" fill="#0d54a0" />
          </svg>
        </AppSlot>
        <AppSlot>
          <svg width="29" height="30" viewBox="0 0 29 30">
            <path d="M0 5H29V26Q29 30 25 30H4Q0 30 0 26Z" fill="#f1f1f1" />
            <path d="M8 6.5V2.5Q8 1 9.5 1H19.5Q21 1 21 2.5V6.5" fill="none" stroke="#29a9ea" strokeWidth="2" />
            <rect x="8.5" y="11" width="5.5" height="5.5" fill="#e8502a" />
            <rect x="15" y="11" width="5.5" height="5.5" fill="#7cb518" />
            <rect x="8.5" y="17.5" width="5.5" height="5.5" fill="#17a3e8" />
            <rect x="15" y="17.5" width="5.5" height="5.5" fill="#f9b914" />
          </svg>
        </AppSlot>
        <AppSlot>
          <ChromeIcon />
        </AppSlot>
        <AppSlot>
          <svg width="28" height="30" viewBox="0 0 28 30">
            <defs>
              <linearGradient id="hexa" x1="0" y1="0" x2="1" y2="1">
                <stop offset="0" stopColor="#4a8df8" />
                <stop offset="0.6" stopColor="#4a55ee" />
                <stop offset="1" stopColor="#7a35e6" />
              </linearGradient>
            </defs>
            <path d="M12 0.8Q14 -0.3 16 0.8L26 6.5Q28 7.6 28 10V20Q28 22.4 26 23.5L16 29.2Q14 30.3 12 29.2L2 23.5Q0 22.4 0 20V10Q0 7.6 2 6.5Z" fill="url(#hexa)" />
            <path d="M4.5 21L10 8.5Q11 7 12 8.5L17.5 21M14.5 13.5Q16.5 11 18 13.5L22.5 21" fill="none" stroke="#f2f5ff" strokeWidth="2" />
          </svg>
        </AppSlot>
        <div className="relative -mx-[10px] my-[5px] flex h-[50px] w-[50px] items-center justify-center rounded-[6px] border border-[#3a3a3a] bg-[#2e2e2e]">
          <ChromeIcon />
          <div className="absolute top-[3px] right-[4px] flex size-5 items-center justify-center rounded-full bg-[#5d4037] font-[Roboto,sans-serif] text-[11px] font-bold text-[#d8ccc8]">G</div>
          <div className="absolute bottom-0 h-1 w-5 rounded-full bg-[#4cc2ff]" />
        </div>
        <AppSlot running>
          <FaWhatsapp size={34} color="#25d366" className="shrink-0" />
        </AppSlot>
        <AppSlot running>
          <svg width="30" height="30" viewBox="0 0 30 30">
            <path d="M22 0V9L3.5 22.5L0.5 20V18L22 0Z" fill="#0a72bd" />
            <path d="M22 30V21L3.5 7.5L0.5 10V12L22 30Z" fill="#1890dc" />
            <path d="M22 0L30 3.5V26.5L22 30Z" fill="#2aa7f5" />
          </svg>
        </AppSlot>
      </div>
      <div className="mr-6 ml-auto flex items-center">
        <svg width="14" height="9" viewBox="0 0 14 9" fill="none">
          <path d="M0.8 8L7 1.5L13.2 8" stroke="#fff" strokeWidth="1.7" />
        </svg>
        <svg width="21" height="20" viewBox="0 0 21 20" className="ml-[22px]">
          <circle cx="10" cy="6.5" r="6" fill="#8b8b8b" />
          <path d="M5 14.5A4.5 4.5 0 0 1 4 6Q8 3.5 11 7L15 14.5Z" fill="#c9c9c9" />
          <circle cx="15" cy="13.5" r="5.8" fill="#4cc2ff" />
          <path d="M15 12.5V16.5M15 10.2V11.5" stroke="#10222c" strokeWidth="1.3" />
        </svg>
        <svg width="21" height="16" viewBox="0 0 21 16" fill="none" stroke="#fff" strokeWidth="1.4" className="ml-[19px]">
          <rect x="0.7" y="0.7" width="19.6" height="14.6" rx="2" />
          <path d="M4 4.5H17.5M4 8H17.5" strokeDasharray="1.6 1.4" />
          <path d="M5 11.8H16" />
        </svg>
        <div className="relative -top-px ml-[20px] w-[36px] text-center leading-5 tracking-[-0.3px]">
          ENG
          <br />
          IN
        </div>
        <svg width="20" height="16" viewBox="0 0 20 16" fill="none" stroke="#fff" strokeWidth="1.3" className="ml-[19px]">
          <path d="M0.8 5.5Q10 -3.5 19.2 5.5M3.6 8.5Q10 2.5 16.4 8.5M6.5 11.3Q10 8 13.5 11.3" />
          <circle cx="10" cy="13.5" r="1.8" fill="#fff" stroke="none" />
        </svg>
        <svg width="21" height="18" viewBox="0 0 21 18" fill="none" stroke="#fff" strokeWidth="1.3" className="ml-[10px]">
          <path d="M0.7 6.5H3.5L8 2V16L3.5 11.5H0.7Z" />
          <path d="M11 6.5Q12.5 9 11 11.5M14 4Q17 9 14 14M17 1.5Q21.5 9 17 16.5" />
        </svg>
        <svg width="20" height="14" viewBox="0 0 20 14" fill="none" className="ml-[9px]">
          <rect x="0.7" y="0.7" width="16.6" height="12.6" rx="2.5" stroke="#fff" strokeWidth="1.3" />
          <rect x="3" y="3" width="10" height="8" rx="1" fill="#fff" />
          <path d="M19 5V9" stroke="#fff" strokeWidth="1.8" />
        </svg>
        <div className="relative -top-px w-[98px] text-right leading-5 tracking-[-0.1px]">
          <span className="tracking-[-0.4px]">17:24</span>
          <br />
          19-12-2024
        </div>
      </div>
    </footer>
  );
}

export default function App() {
  return (
    <div className="flex h-[1200px] w-[1920px] flex-col overflow-hidden bg-[#1e1e1e]">
      <BrowserChrome />
      <div className="flex h-[1031px] shrink-0">
        <LeftPanel />
        <Canvas />
        <RightPanel />
      </div>
      <Taskbar />
    </div>
  );
}
